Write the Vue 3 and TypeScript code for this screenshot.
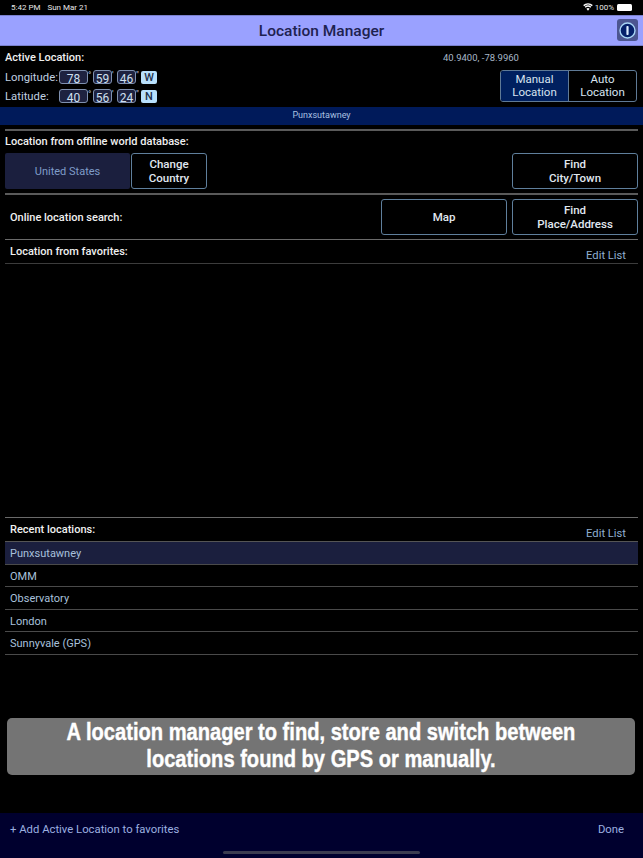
<script setup lang="ts">
interface Coord { label: string; deg: string; min: string; sec: string; dir: string }
const coords: Coord[] = [
  { label: 'Longitude:', deg: '78', min: '59', sec: '46', dir: 'W' },
  { label: 'Latitude:', deg: '40', min: '56', sec: '24', dir: 'N' },
]
const recents: string[] = ['Punxsutawney', 'OMM', 'Observatory', 'London', 'Sunnyvale (GPS)']
</script>

<template>
  <div class="screen">
    <div class="status">
      <span class="status-left"><span>5:42 PM</span><span>Sun Mar 21</span></span>
      <span class="status-right">
        <svg width="10" height="8" viewBox="0 0 20 15" fill="#fff">
          <path d="M10 15l-3.2-4a5 5 0 0 1 6.4 0zM5.2 9 3.4 6.900a10 10 0 0 1 13.200 0L14.800 9a7.400 7.400 0 0 0-9.600 0zM2.300 5.800.4 3.700a14.500 14.500 0 0 1 19.200 0l-1.900 2.100a11.700 11.700 0 0 0-15.400 0z" />
        </svg>
        <span>100%</span>
        <span class="battery"></span>
      </span>
    </div>

    <header class="nav">
      <h1>Location Manager</h1>
      <button class="info">
        <svg width="17" height="17" viewBox="0 0 17 17">
          <circle cx="8.500" cy="8.500" r="7.500" fill="#06206a" stroke="#a8d4f4" stroke-width="1.400" />
          <rect x="7.400" y="4" width="2.200" height="9" rx="0.800" fill="#dcecff" />
        </svg>
      </button>
    </header>

    <section class="active">
      <div class="active-top">
        <span class="strong">Active Location:</span>
        <span class="latlon">40.9400, -78.9960</span>
      </div>
      <div class="active-bottom">
        <div class="coords">
          <div v-for="c in coords" :key="c.label" class="coord">
            <span class="coord-label">{{ c.label }}</span>
            <span class="field deg">{{ c.deg }}</span><span class="unit">°</span>
            <span class="field">{{ c.min }}</span><span class="unit">'</span>
            <span class="field">{{ c.sec }}</span><span class="unit">"</span>
            <span class="dir">{{ c.dir }}</span>
          </div>
        </div>
        <div class="segment">
          <span class="seg on">Manual<br />Location</span>
          <span class="seg">Auto<br />Location</span>
        </div>
      </div>
    </section>

    <div class="name-bar">Punxsutawney</div>

    <div class="rule thick first"></div>
    <section class="offline">
      <div class="strong offline-title">Location from offline world database:</div>
      <div class="btn-row">
        <span class="country">United States</span>
        <button class="btn small">Change<br />Country</button>
        <button class="btn end">Find<br />City/Town</button>
      </div>
    </section>
    <div class="rule thick"></div>

    <section class="online">
      <span class="strong">Online location search:</span>
      <button class="btn end">Map</button>
      <button class="btn">Find<br />Place/Address</button>
    </section>
    <div class="rule"></div>

    <section class="list-head fav">
      <span class="strong">Location from favorites:</span>
      <span class="edit">Edit List</span>
    </section>
    <div class="rule dim"></div>

    <div class="favorites"></div>

    <div class="rule"></div>
    <section class="list-head">
      <span class="strong">Recent locations:</span>
      <span class="edit">Edit List</span>
    </section>
    <ul class="recents">
      <li v-for="(r, i) in recents" :key="r" :class="{ selected: i === 0 }">{{ r }}</li>
    </ul>

    <div class="caption-wrap">
      <div class="caption"><span class="caption-text">A location manager to find, store and switch between<br />locations found by GPS or manually.</span></div>
    </div>

    <footer class="footer">
      <div class="footer-row">
        <span>+ Add Active Location to favorites</span>
        <span>Done</span>
      </div>
      <div class="home"></div>
    </footer>
  </div>
</template>

<style>
html, body { margin: 0; background: #000; }
</style>

<style scoped>
* { box-sizing: border-box; }
.screen {
  width: 643px;
  height: 858px;
  background: #000;
  color: #fff;
  font-family: Roboto, "Liberation Sans", sans-serif;
  display: flex;
  flex-direction: column;
  overflow: hidden;
}
.status {
  height: 15px;
  flex: none;
  display: flex;
  justify-content: space-between;
  align-items: center;
  padding: 0 11px 1px 11px;
  font-size: 8px;
  color: #e8e8e8;
}
.status-left { display: flex; gap: 7px; }
.status-right { display: flex; align-items: center; gap: 2px; }
.battery {
  width: 15px;
  height: 7px;
  background: #fff;
  border-radius: 1.500px;
  margin-left: 1px;
  display: block;
}
.nav {
  height: 31px;
  flex: none;
  background: #9aa1ff;
  border-top: 1px solid #7a80cc;
  border-bottom: 1px solid #7a80cc;
  display: flex;
  align-items: center;
  justify-content: center;
  position: relative;
}
.nav h1 {
  margin: 0;
  font-size: 15.500px;
  font-weight: 500;
  color: #1e2250;
}
.info {
  position: absolute;
  right: 5px;
  top: 3px;
  width: 21px;
  height: 22px;
  border: 0;
  padding: 0;
  border-radius: 3px;
  background: #4c5590;
  display: flex;
  align-items: center;
  justify-content: center;
}
.strong { font-size: 11px; font-weight: 500; color: #f0f0f0; }
.active { height: 61px; flex: none; padding: 0 6px 0 5px; }
.active-top { height: 22px; display: flex; align-items: center; position: relative; }
.latlon {
  position: absolute;
  left: 438px;
  font-size: 9.500px;
  color: #a8b8c8;
}
.active-bottom { display: flex; justify-content: space-between; align-items: flex-start; }
.coords { display: flex; flex-direction: column; gap: 3px; margin-top: 1px; }
.coord { display: flex; align-items: center; height: 16px; }
.coord-label { width: 54px; font-size: 11.300px; color: #c0d0e0; }
.field {
  width: 19px;
  height: 14px;
  border: 1px solid #7f90b0;
  border-radius: 3px;
  background: #1e2240;
  color: #d0e0f0;
  font-size: 12px;
  line-height: 16px;
  text-align: center;
}
.field.deg { width: 29px; }
.unit { width: 5px; font-size: 9px; color: #c0d0e0; line-height: 12px; align-self: flex-start; }
.dir {
  width: 16px;
  height: 13px;
  border-radius: 2px;
  background: #b8e0fc;
  color: #22304a;
  font-size: 11px;
  font-weight: 500;
  line-height: 13px;
  text-align: center;
}
.segment {
  width: 137px;
  height: 32px;
  margin-top: 2px;
  display: flex;
  border: 1px solid #5f7a96;
  border-radius: 3px;
  overflow: hidden;
}
.seg {
  flex: 1;
  font-size: 11.500px;
  line-height: 13px;
  text-align: center;
  padding-top: 2px;
  color: #d8e4f0;
}
.seg.on { background: #00205f; border-right: 1px solid #5f7a96; flex: 0 0 68px; }
.name-bar {
  height: 18px;
  flex: none;
  background: #001a5a;
  color: #a8c0e0;
  font-size: 9px;
  line-height: 17px;
  text-align: center;
}
.rule { height: 1px; flex: none; margin: 0 5px 0 5px; background: #6a6a6a; }
.rule.thick { height: 2px; background: #5a5a5a; }
.rule.first { margin-top: 4px; }
.rule.dim { background: #3c3c3c; }
.offline { height: 62px; flex: none; padding: 0 5px; }
.offline-title { height: 22px; line-height: 21px; }
.btn-row { display: flex; gap: 1px; }
.country {
  width: 125px;
  height: 36px;
  background: #1b1f3e;
  border-radius: 2px;
  color: #7f9cc8;
  font-size: 11px;
  display: flex;
  align-items: center;
  justify-content: center;
}
.btn {
  width: 126px;
  height: 36px;
  flex: none;
  padding: 0;
  background: #000;
  border: 1px solid #5f7f9c;
  border-radius: 3px;
  color: #e0e8f0;
  font-family: inherit;
  font-size: 11.500px;
  line-height: 14px;
  font-weight: 500;
}
.btn.small { width: 76px; }
.end { margin-left: auto; }
.online {
  height: 44px;
  flex: none;
  padding: 0 5px 0 10px;
  display: flex;
  align-items: center;
  gap: 5px;
}
.list-head {
  height: 23px;
  flex: none;
  padding: 0 17px 0 10px;
  display: flex;
  justify-content: space-between;
  align-items: flex-start;
}
.list-head .strong { line-height: 23px; }
.edit { font-size: 11.200px; color: #8fb0d0; line-height: 14px; margin-top: 9px; }
.favorites { flex: none; height: 253px; }
.recents {
  list-style: none;
  margin: 0 5px;
  padding: 0;
  flex: none;
  border-top: 1px solid #555;
}
.recents li {
  height: 22.600px;
  padding-left: 5px;
  border-bottom: 1px solid #4a4a4a;
  font-size: 11px;
  line-height: 23px;
  color: #a8c0dc;
}
.recents li.selected { background: #1b1f3e; }
.caption-wrap { flex: none; padding: 63px 8px 0 7px; }
.caption {
  height: 57px;
  background: #747474;
  border-radius: 5px;
  color: #fff;
  font-family: "Liberation Sans", sans-serif;
  font-size: 24px;
  font-weight: 700;
  line-height: 27px;
  text-align: center;
}
.caption-text {
  display: block;
  white-space: nowrap;
  transform: scaleX(0.838);
  -webkit-text-stroke: 0.4px #fff;
}
.footer {
  margin-top: auto;
  height: 45px;
  flex: none;
  background: #00002e;
  padding: 0 19px 0 10px;
  position: relative;
}
.footer-row {
  display: flex;
  justify-content: space-between;
  font-size: 11.300px;
  line-height: 34px;
  color: #9cb0e0;
}
.home {
  position: absolute;
  left: 223px;
  bottom: 4px;
  width: 197px;
  height: 3px;
  border-radius: 2px;
  background: #3c3c50;
}
</style>
